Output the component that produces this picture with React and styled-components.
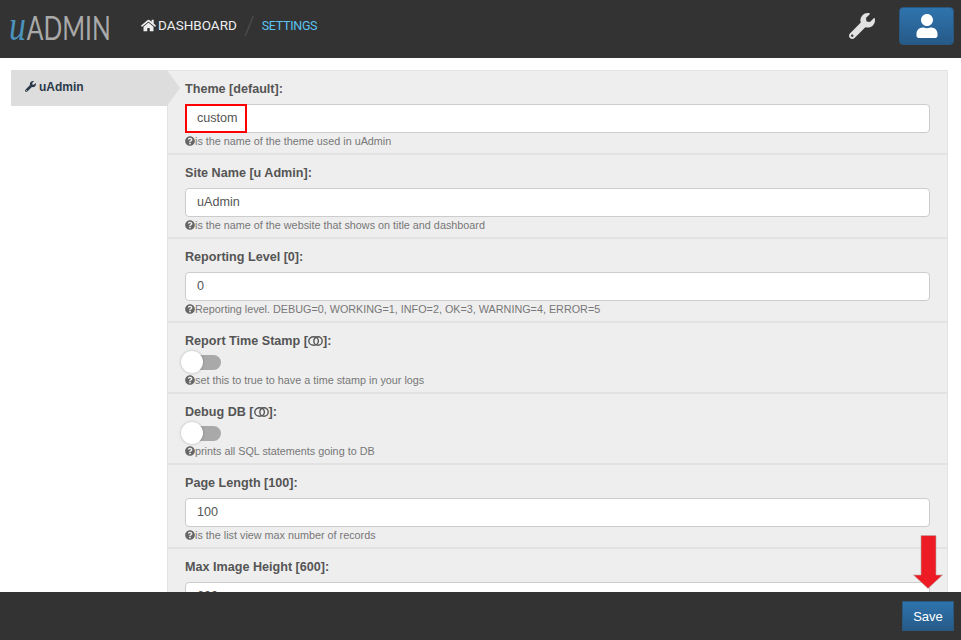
import React from 'react'
import styled, {createGlobalStyle} from 'styled-components'
import {FaHome, FaWrench, FaUser, FaQuestionCircle} from 'react-icons/fa'

const fields = [
    {label: 'Theme [default]', value: 'custom', help: 'is the name of the theme used in uAdmin', marked: true},
    {label: 'Site Name [u Admin]', value: 'uAdmin', help: 'is the name of the website that shows on title and dashboard'},
    {label: 'Reporting Level [0]', value: '0', help: 'Reporting level. DEBUG=0, WORKING=1, INFO=2, OK=3, WARNING=4, ERROR=5'},
    {label: 'Report Time Stamp', toggle: true, help: 'set this to true to have a time stamp in your logs'},
    {label: 'Debug DB', toggle: true, help: 'prints all SQL statements going to DB'},
    {label: 'Page Length [100]', value: '100', help: 'is the list view max number of records'},
    {label: 'Max Image Height [600]', value: '600'},
]

export default function App() {
    return (
        <Page>
            <GlobalStyle />
            <Header>
                <LogoBox>
                    <Logo><em>u</em>ADMIN</Logo>
                </LogoBox>
                <Crumbs>
                    <Crumb><FaHome size={15} /> DASHBOARD</Crumb>
                    <Slash>/</Slash>
                    <Crumb $active>SETTINGS</Crumb>
                </Crumbs>
                <HeaderTools>
                    <FaWrench size={26} color="#e2e2e2" />
                    <UserButton><FaUser size={24} /></UserButton>
                </HeaderTools>
            </Header>
            <Main>
                <Sidebar>
                    <Tab><FaWrench size={11} /> uAdmin</Tab>
                </Sidebar>
                <Panel>
                    {fields.map((f) => (
                        <Row key={f.label}>
                            <Label>
                                {f.label}
                                {f.toggle && <> [<BoolIcon />]</>}:
                            </Label>
                            {f.toggle ? (
                                <Toggle><Knob /></Toggle>
                            ) : (
                                <InputWrap>
                                    <Input defaultValue={f.value} />
                                    {f.marked && <Marker />}
                                </InputWrap>
                            )}
                            {f.help && <Help><FaQuestionCircle size={10} />{f.help}</Help>}
                        </Row>
                    ))}
                </Panel>
            </Main>
            <Footer>
                <SaveButton>Save</SaveButton>
            </Footer>
            <Arrow viewBox="0 0 30 54">
                <path d="M8 0.5H23V40H29.5L15 53.5L0.5 40H8Z" fill="#ed1c24" stroke="#b9a9a9" strokeWidth="0.6" />
            </Arrow>
        </Page>
    )
}

function BoolIcon() {
    return (
        <svg width="15" height="10" viewBox="0 0 15 10" fill="none" stroke="#555" strokeWidth="1.4" style={{verticalAlign: '-0.5px'}}>
            <ellipse cx="5.6" cy="5" rx="4.8" ry="4.2" />
            <circle cx="10" cy="5" r="4.2" />
        </svg>
    )
}

const GlobalStyle = createGlobalStyle`
    html, body {
        margin: 0;
        height: 100%;
        overflow: hidden;
        background: #fff;
        font-family: "Liberation Sans", Arial, sans-serif;
    }
`
const Page = styled.div`
    position: relative;
    height: 100vh;
    display: flex;
    flex-direction: column;
    overflow: hidden;
`
const Header = styled.header`
    flex: 0 0 58px;
    display: flex;
    align-items: center;
    background: #333;
    padding: 0 7px 0 9px;
`
const LogoBox = styled.div`
    flex: 0 0 130px;
`
const Logo = styled.div`
    display: inline-block;
    transform: scaleX(0.77);
    transform-origin: left center;
    font-family: Lato, sans-serif;
    font-size: 32px;
    line-height: 1;
    color: #a9a9a9;
    margin-top: -6px;
    white-space: nowrap;
    em {
        font-family: "Liberation Serif", serif;
        font-style: italic;
        color: #4a93bd;
        font-size: 44px;
        margin-right: 1px;
    }
`
const Crumbs = styled.nav`
    display: flex;
    align-items: center;
    margin-top: -8px;
`
const Crumb = styled.span`
    display: flex;
    align-items: center;
    gap: 2px;
    font-family: Roboto, sans-serif;
    font-size: ${(p) => (p.$active ? '12.5px' : '13.5px')};
    letter-spacing: ${(p) => (p.$active ? '-0.3px' : '0')};
    color: ${(p) => (p.$active ? '#5cc3f2' : '#eee')};
`
const Slash = styled.span`
    font-family: Lato, sans-serif;
    font-size: 25px;
    font-weight: 300;
    color: #555;
    margin: 0 7px;
`
const HeaderTools = styled.div`
    margin-left: auto;
    display: flex;
    align-items: center;
    gap: 24px;
    margin-top: -6px;
`
const UserButton = styled.div`
    width: 55px;
    height: 38px;
    display: flex;
    align-items: center;
    justify-content: center;
    border-radius: 4px;
    color: #fff;
    background: linear-gradient(#2f74ae, #265a88);
    border: 1px solid #28577f;
    box-sizing: border-box;
`
const Main = styled.main`
    flex: 1;
    min-height: 0;
    display: flex;
    align-items: flex-start;
    padding: 12px 13px 0 11px;
    overflow: hidden;
`
const Sidebar = styled.aside`
    flex: 0 0 156px;
`
const Tab = styled.div`
    position: relative;
    height: 36px;
    display: flex;
    align-items: center;
    gap: 3px;
    padding: 0 0 3px 14px;
    box-sizing: border-box;
    background: #ddd;
    color: #2b3a4a;
    font-size: 12px;
    font-weight: bold;
    &::after {
        content: '';
        position: absolute;
        left: 100%;
        top: 0;
        border-style: solid;
        border-width: 18px 0 18px 13px;
        border-color: transparent transparent transparent #ddd;
        z-index: 1;
    }
`
const Panel = styled.section`
    flex: 1;
    background: #eee;
    border: 1px solid #e3e3e3;
    border-bottom: 0;
    box-sizing: border-box;
`
const Row = styled.div`
    padding: 10px 17px 5px;
    border-bottom: 2px solid #e2e2e2;
`
const Label = styled.div`
    font-size: 12.6px;
    font-weight: bold;
    line-height: 17px;
    color: #555;
    margin-bottom: 6px;
`
const InputWrap = styled.div`
    position: relative;
`
const Input = styled.input`
    display: block;
    width: 100%;
    height: 29px;
    box-sizing: border-box;
    padding: 0 11px 2px;
    background: #fff;
    border: 1px solid #ccc;
    border-radius: 4px;
    font-family: "Liberation Sans", Arial, sans-serif;
    font-size: 12.6px;
    color: #555;
    outline: none;
`
const Marker = styled.div`
    position: absolute;
    left: 0;
    top: 0;
    width: 62px;
    height: 29px;
    box-sizing: border-box;
    border: 2.5px solid #f00;
`
const Toggle = styled.div`
    position: relative;
    width: 36px;
    height: 15px;
    border-radius: 8px;
    background: #a9a9a9;
    margin: -1px 0 2px;
`
const Knob = styled.div`
    position: absolute;
    left: -4px;
    top: -4px;
    width: 22px;
    height: 22px;
    border-radius: 50%;
    background: #fff;
    box-shadow: 0 0 3px rgba(0, 0, 0, 0.25);
`
const Help = styled.div`
    display: flex;
    align-items: center;
    height: 15px;
    font-size: 10.8px;
    color: #777;
    svg {
        color: #666;
        flex: none;
    }
`
const Footer = styled.footer`
    flex: 0 0 48px;
    display: flex;
    align-items: center;
    justify-content: flex-end;
    background: #333;
    padding: 0 7px 0 0;
    z-index: 2;
`
const SaveButton = styled.button`
    width: 52px;
    height: 30px;
    padding: 0;
    border: 1px solid #28577f;
    background: linear-gradient(#2f74ae, #265a88);
    color: #fff;
    font-family: "Liberation Sans", Arial, sans-serif;
    font-size: 13px;
`
const Arrow = styled.svg`
    position: absolute;
    left: 913px;
    top: 535px;
    width: 30px;
    height: 54px;
    z-index: 3;
`
